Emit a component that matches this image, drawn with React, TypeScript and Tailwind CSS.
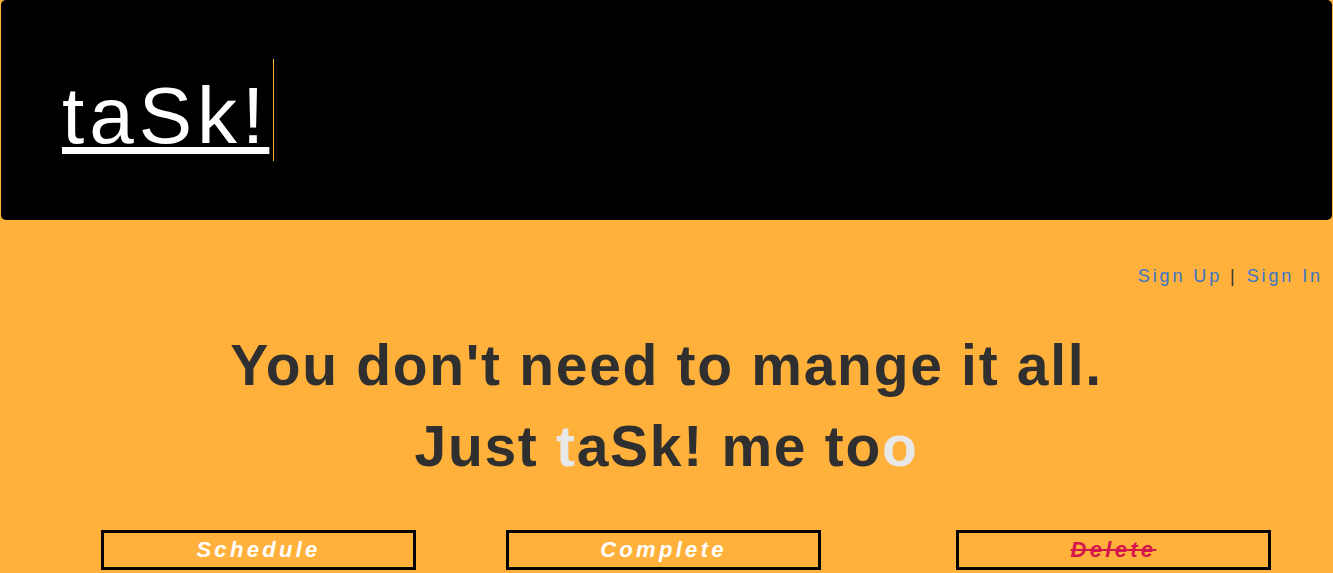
import React from "react";

export default function App() {
  const font = { fontFamily: '"Liberation Sans", Arial, sans-serif' };
  return (
    <div className="min-h-[573px] w-full bg-[#ffb13b] overflow-hidden" style={font}>
      <header className="mx-px h-[220px] rounded-[5px] bg-black pt-[59px] pl-[61px]">
        <span className="inline-block border-r border-[#ffb13b] pr-[4px] pt-[11px] text-[80px] leading-[91px] tracking-[5px] text-white underline decoration-[7px] underline-offset-[4px]">
          taSk!
        </span>
      </header>

      <div className="mt-[44px] flex justify-end pr-[10px] text-[18px] leading-[24px] tracking-[2.9px]">
        <a className="text-[#3a76c6]">Sign Up</a>
        <span className="mr-[9px] ml-[8px] text-[#333]">|</span>
        <a className="text-[#3a76c6]">Sign In</a>
      </div>

      <div className="mt-[37px] text-center text-[57px] font-bold leading-[81px] tracking-[1.7px] text-[#2f2f2f]">
        <div>You don't need to mange it all.</div>
        <div>
          Just <span className="text-[#e8e8e8]">t</span>aSk! me to<span className="text-[#e8e8e8]">o</span>
        </div>
      </div>

      <div className="mt-[43px] flex pl-[101px]">
        <button className="h-[40px] w-[315px] border-[3px] border-black text-[22px] font-bold italic leading-[34px] tracking-[3.3px] text-white">
          Schedule
        </button>
        <button className="ml-[90px] h-[40px] w-[315px] border-[3px] border-black text-[22px] font-bold italic leading-[34px] tracking-[3.3px] text-white">
          Complete
        </button>
        <button className="ml-[135px] h-[40px] w-[315px] border-[3px] border-black text-[22px] font-bold italic leading-[34px] tracking-[3.3px] text-[#d4164c] line-through">
          Delete
        </button>
      </div>
    </div>
  );
}
